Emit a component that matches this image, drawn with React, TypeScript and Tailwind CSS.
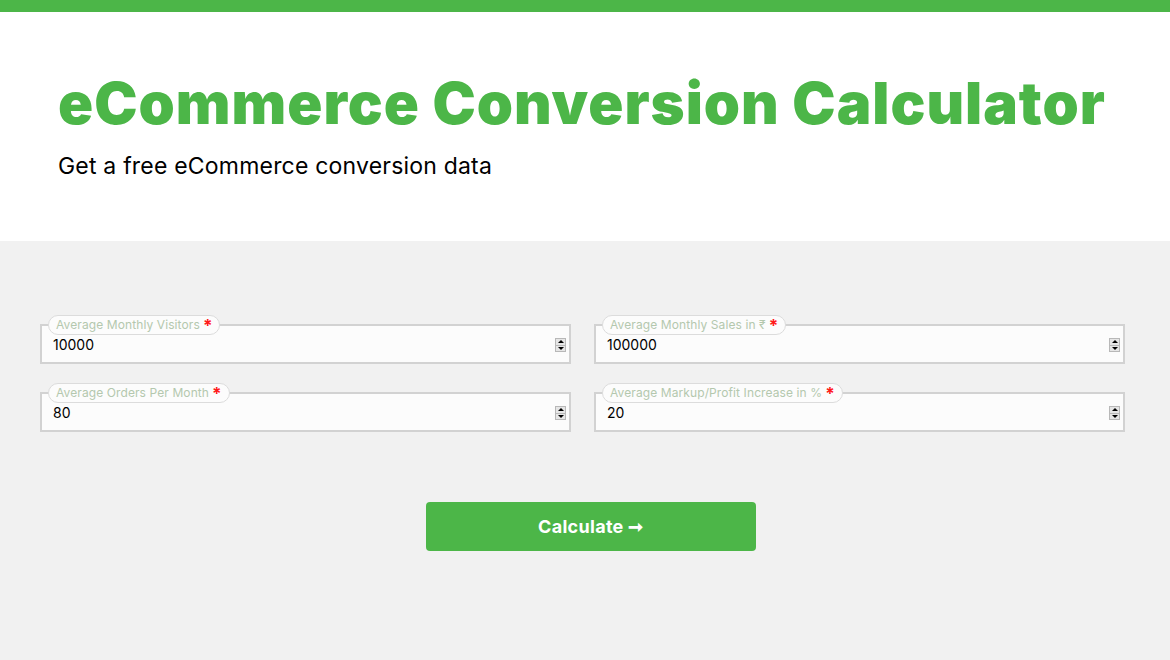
import { useState } from 'react';

interface FieldProps {
  label: string;
  value: string;
  onChange: (v: string) => void;
}

function Spinner() {
  return (
    <div className="absolute right-[3px] top-[12px] flex flex-col w-[11px] h-[14px] border border-[#b8b8b8] bg-[#e6e6e6]">
      <div className="flex-1 flex items-center justify-center border-b border-[#b8b8b8]">
        <div className="w-0 h-0 border-l-[3px] border-r-[3px] border-b-[3px] border-l-transparent border-r-transparent border-b-black" />
      </div>
      <div className="flex-1 flex items-center justify-center">
        <div className="w-0 h-0 border-l-[3px] border-r-[3px] border-t-[3px] border-l-transparent border-r-transparent border-t-black" />
      </div>
    </div>
  );
}

function Field({ label, value, onChange }: FieldProps) {
  return (
    <div className="relative pt-[9px]">
      <div className="absolute left-[8px] top-0 z-10 flex items-center h-[20px] px-[7px] rounded-full border border-[#dcdcdc] bg-[#fcfcfc] text-[12px] text-[#b4c8ae] tracking-[0.1px] leading-none">
        {label}
        <span className="ml-[3px] text-[#ff1a1a] text-[17px] font-bold leading-none mt-[2px]">*</span>
      </div>
      <div className="relative h-[40px] border-2 border-[#d2d2d2] bg-[#fcfcfc]">
        <input
          value={value}
          onChange={(e) => onChange(e.target.value)}
          className="w-full h-full pl-[11px] pt-[1px] bg-transparent outline-none text-[14px] text-black"
        />
        <Spinner />
      </div>
    </div>
  );
}

export default function App() {
  const [visitors, setVisitors] = useState('10000');
  const [sales, setSales] = useState('100000');
  const [orders, setOrders] = useState('80');
  const [markup, setMarkup] = useState('20');

  return (
    <div className="min-h-[660px] bg-[#f1f1f1] font-['Inter',sans-serif]">
      <div className="h-[12px] bg-[#4cb648]" />
      <div className="bg-white h-[229px] pl-[58px] pt-[56px]">
        <h1 className="text-[58px] leading-[70px] font-black text-[#4cb648] tracking-[1px]">
          eCommerce Conversion Calculator
        </h1>
        <p className="mt-[11px] text-[23px] text-black tracking-[0.2px]">Get a free eCommerce conversion data</p>
      </div>
      <div className="px-[40px] pt-[74px]">
        <div className="grid grid-cols-2 gap-x-[23px] gap-y-[19px] pr-[5px]">
          <Field label="Average Monthly Visitors" value={visitors} onChange={setVisitors} />
          <Field label="Average Monthly Sales in ₹" value={sales} onChange={setSales} />
          <Field label="Average Orders Per Month" value={orders} onChange={setOrders} />
          <Field label="Average Markup/Profit Increase in %" value={markup} onChange={setMarkup} />
        </div>
        <div className="flex justify-center mt-[70px] pl-[11px]">
          <button className="w-[330px] h-[49px] rounded-[4px] bg-[#4cb648] text-white text-[18px] font-bold tracking-[0.3px] flex items-center justify-center gap-[4px]">
            Calculate <span className="text-[18px]">➞</span>
          </button>
        </div>
      </div>
    </div>
  );
}
